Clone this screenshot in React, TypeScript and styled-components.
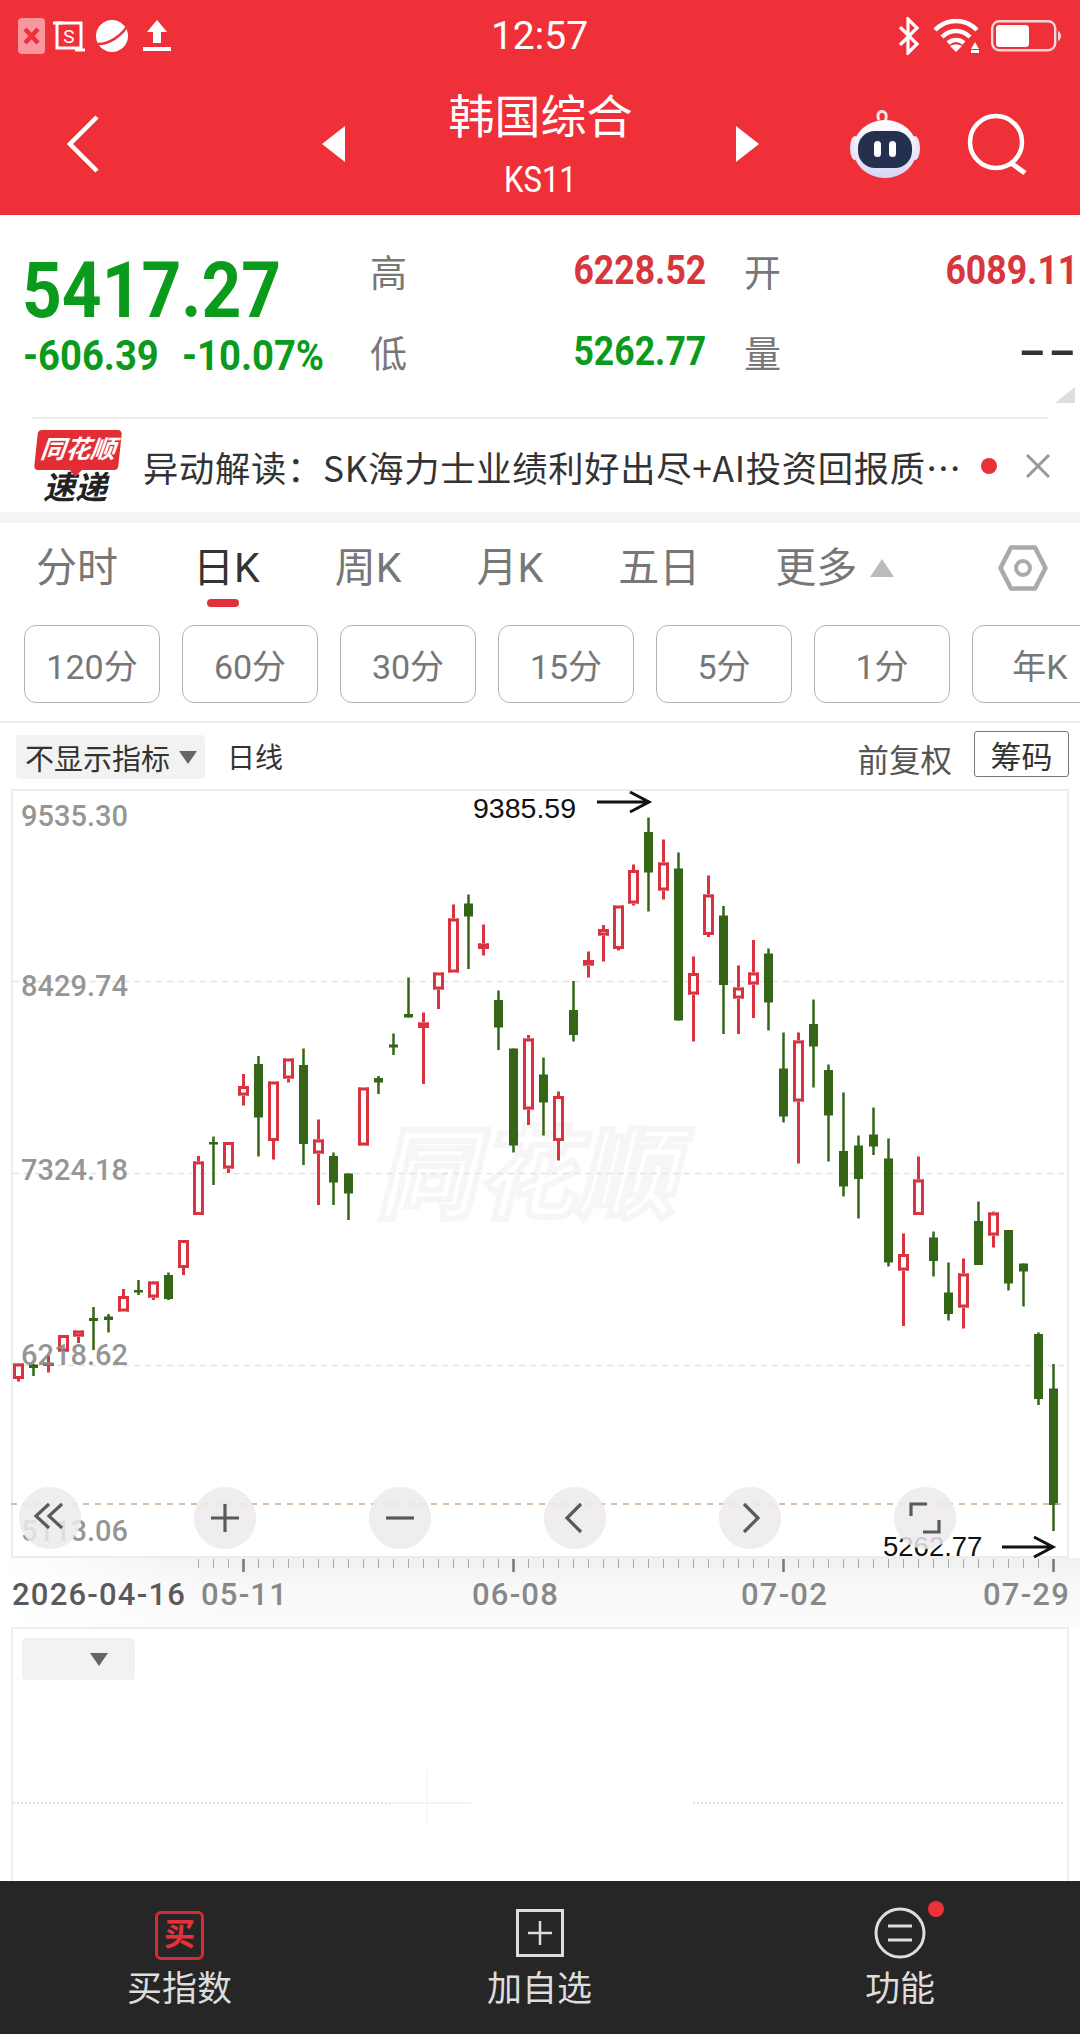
import * as React from 'react';
import styled, { createGlobalStyle } from 'styled-components';

const GlobalStyle = createGlobalStyle`
	html, body {
		margin: 0;
		padding: 0;
		background: #fff;
	}
	body {
		font-family: Roboto, "Noto Sans CJK SC", sans-serif;
	}
`;

const RED = '#d9333f';
const GREEN = '#356618';
const UP = '#d8363d';
const DOWN = '#0a9a1c';

// r = red, g = green: [colour, high, bodyTop, bodyBottom, low]
type Candle = ['r' | 'g', number, number, number, number];

const candles: Candle[] = [
	['r', 1363, 1363.5, 1379, 1381.5],
	['g', 1364, 1364.5, 1368, 1376],
	['r', 1355.5, 1363, 1366, 1372.5],
	['r', 1335, 1335, 1351.5, 1351.5],
	['r', 1330.5, 1330.5, 1336.5, 1343],
	['g', 1307, 1318, 1321, 1350],
	['g', 1314, 1316.5, 1320, 1332.5],
	['r', 1289, 1296, 1311.5, 1311.5],
	['g', 1280, 1290, 1292.5, 1295],
	['r', 1281, 1281.5, 1297.5, 1300],
	['g', 1272.5, 1275, 1299, 1300],
	['r', 1240, 1240, 1268, 1275],
	['r', 1156, 1161.5, 1215, 1215],
	['g', 1136.5, 1142, 1144.5, 1185],
	['r', 1142, 1142, 1168.5, 1173],
	['r', 1074, 1086, 1095.5, 1105.5],
	['g', 1056, 1064, 1117.5, 1156.5],
	['r', 1081.5, 1081.5, 1141, 1159.5],
	['r', 1058.5, 1058.5, 1078.5, 1082.5],
	['g', 1048.5, 1065, 1144, 1165],
	['r', 1119.5, 1139.5, 1153.5, 1205],
	['g', 1152.5, 1156, 1182.5, 1205],
	['g', 1173.5, 1173.5, 1193.5, 1220],
	['r', 1087.5, 1087.5, 1145.5, 1145.5],
	['g', 1076, 1078, 1082.5, 1094],
	['g', 1033.5, 1044.5, 1047.5, 1055],
	['g', 977.5, 1014, 1017.5, 1017.5],
	['r', 1012.5, 1022.5, 1028, 1084],
	['r', 972.5, 972.5, 989.5, 1009],
	['r', 904.5, 918.5, 972.5, 972.5],
	['g', 894.5, 903.5, 916.5, 969],
	['r', 924.5, 943.5, 949, 955.5],
	['g', 990.5, 1000, 1027.5, 1050],
	['g', 1048.5, 1048.5, 1145.5, 1152.5],
	['r', 1035, 1038.5, 1109.5, 1125],
	['g', 1057.5, 1074.5, 1102.5, 1135.5],
	['r', 1091.5, 1096, 1141, 1160.5],
	['g', 981, 1010, 1035, 1041.5],
	['r', 951.5, 960, 965.5, 977.5],
	['r', 925, 929, 935.5, 961.5],
	['r', 905.5, 905.5, 949, 950.5],
	['r', 864.5, 870, 903.5, 905.5],
	['g', 817.5, 832, 872.5, 911.5],
	['r', 839.5, 862.5, 890.5, 899.5],
	['g', 852.5, 868.5, 1020.5, 1020.5],
	['r', 956.5, 973, 994.5, 1041.5],
	['r', 875.5, 894.5, 935, 937],
	['g', 906, 915.5, 985, 1034],
	['r', 965.5, 987.5, 998.5, 1034],
	['r', 940, 972.5, 984.5, 1018],
	['g', 948.5, 953.5, 1002.5, 1030.5],
	['g', 1032.5, 1068.5, 1116.5, 1122.5],
	['r', 1032.5, 1040.5, 1101.5, 1163.5],
	['g', 999.5, 1024, 1046.5, 1087.5],
	['g', 1064.5, 1070, 1115.5, 1161.5],
	['g', 1092.5, 1151, 1186.5, 1196.5],
	['g', 1135.5, 1145.5, 1179, 1218.5],
	['g', 1107.5, 1134.5, 1146.5, 1155],
	['g', 1138.5, 1158.5, 1262.5, 1266.5],
	['r', 1233.5, 1254, 1270.5, 1326],
	['r', 1156.5, 1179.5, 1215, 1215],
	['g', 1231.5, 1237.5, 1261, 1276.5],
	['g', 1262.5, 1292.5, 1314, 1320.5],
	['r', 1258.5, 1273.5, 1307.5, 1328.5],
	['g', 1201.5, 1221, 1265, 1265],
	['r', 1211.5, 1212.5, 1235.5, 1247.5],
	['g', 1230, 1230, 1283.5, 1290.5],
	['g', 1263.5, 1263.5, 1271.5, 1306.5],
	['g', 1332.5, 1334, 1399, 1405],
	['g', 1364, 1388.5, 1505, 1531],
];

const candleX = (i: number) => 18.5 + 15 * i;

const Page = styled.div`
	width: 1080px;
	height: 2034px;
	display: flex;
	flex-direction: column;
	overflow: hidden;
	background: #fff;
`;

const Header = styled.header`
	height: 215px;
	flex: none;
	background: #ef3039;
	color: #fff;
	display: flex;
	flex-direction: column;
`;

const StatusBar = styled.div`
	height: 72px;
	padding: 0 19px 0 18px;
	display: grid;
	grid-template-columns: 1fr auto 1fr;
	align-items: center;
`;

const StatusIcons = styled.div<{ $end?: boolean }>`
	display: flex;
	align-items: center;
	justify-content: ${(p) => (p.$end ? 'flex-end' : 'flex-start')};
	gap: ${(p) => (p.$end ? '12px' : '8px')};
`;

const PlanetIcon = styled.svg`
	margin-left: 2px;
`;

const UploadIcon = styled.svg`
	margin-left: 4px;
`;

const Clock = styled.div`
	font-size: 39px;
	line-height: 72px;
`;

const NavBar = styled.div`
	flex: 1;
	display: flex;
	align-items: center;
	padding-left: 67px;
`;

const BackSlot = styled.div`
	width: 255px;
	flex: none;
	display: flex;
`;

const StockTitle = styled.div`
	width: 391px;
	flex: none;
	text-align: center;
	padding-top: 8px;
`;

const StockName = styled.div`
	font-size: 46px;
	line-height: 58px;
	margin-top: -8px;
`;

const StockCode = styled.div`
	display: inline-block;
	font-size: 37px;
	line-height: 40px;
	margin-top: 14px;
	transform: scaleX(0.84);
`;

const RobotSlot = styled.svg`
	margin-left: 89px;
	flex: none;
`;

const SearchSlot = styled.svg`
	margin-left: 45px;
	flex: none;
`;

const Quote = styled.section`
	position: relative;
	height: 202px;
	flex: none;
	display: flex;
	padding: 32px 0 0 23px;
	box-sizing: border-box;
`;

const PriceBlock = styled.div`
	width: 347px;
	flex: none;
	color: ${DOWN};
	font-weight: 700;
`;

const BigPrice = styled.div`
	font-size: 78px;
	line-height: 72px;
	margin-top: 8px;
	margin-left: -1px;
	transform: scaleX(0.89);
	transform-origin: left center;
	white-space: nowrap;
`;

const PriceChange = styled.div`
	display: grid;
	grid-template-columns: 159px auto;
	margin-top: 7px;
	font-size: 42px;
	line-height: 44px;
	white-space: nowrap;
`;

const ChangeValue = styled.span`
	display: inline-block;
	transform: scaleX(0.91);
	transform-origin: left center;
`;

const Stats = styled.div`
	display: grid;
	grid-template-columns: 336px 334px;
	column-gap: 38px;
	row-gap: 34px;
	align-content: start;
`;

const Stat = styled.div`
	display: flex;
	justify-content: space-between;
	align-items: center;
	height: 47px;
`;

const StatLabel = styled.span`
	font-size: 37px;
	color: #777;
`;

const StatValue = styled.span<{ $color: string }>`
	display: inline-block;
	font-size: 40px;
	font-weight: 700;
	color: ${(p) => p.$color};
	transform: scaleX(0.89);
	transform-origin: right center;
`;

const EmptyValue = styled(StatValue)`
	transform: scaleX(1.9);
`;

const CornerMark = styled.div`
	position: absolute;
	right: 5px;
	bottom: 14px;
	width: 0;
	height: 0;
	border-left: 20px solid transparent;
	border-bottom: 16px solid #ddd;
`;

const NewsRow = styled.div`
	height: 95px;
	flex: none;
	margin: 0 32px;
	padding-top: 11px;
	box-sizing: border-box;
	border-top: 2px solid #eeeeee;
	display: flex;
	align-items: flex-start;
	position: relative;
`;

const NewsLogo = styled.div`
	width: 89px;
	margin-left: 1px;
	flex: none;
	display: flex;
	flex-direction: column;
	align-items: center;
`;

const LogoBadge = styled.div`
	position: relative;
	width: 84px;
	height: 40px;
	background: #e32d35;
	border-radius: 4px;
	transform: skewX(-6deg);
	color: #fff;
	font-size: 25px;
	line-height: 40px;
	font-weight: 700;
	font-style: italic;
	text-align: center;
	white-space: nowrap;

	&::after {
		content: '';
		position: absolute;
		left: 36px;
		bottom: -7px;
		border-left: 6px solid transparent;
		border-right: 6px solid transparent;
		border-top: 7px solid #e32d35;
	}
`;

const LogoSub = styled.div`
	font-size: 32px;
	line-height: 30px;
	font-weight: 700;
	font-style: italic;
	color: #222;
	margin: 3px 5px 0 0;
`;

const NewsText = styled.div`
	flex: none;
	width: 818px;
	margin-left: 21px;
	font-family: "Noto Sans CJK SC", sans-serif;
	font-size: 35.3px;
	line-height: 74px;
	letter-spacing: 0.7px;
	color: #333;
	white-space: nowrap;
	overflow: hidden;
`;

const NewsDot = styled.div`
	width: 16px;
	height: 16px;
	border-radius: 50%;
	background: #e8303a;
	margin: 28px 0 0 20px;
	flex: none;
`;

const NewsClose = styled.svg`
	position: absolute;
	right: -2px;
	top: 35px;
`;

const GreyBand = styled.div`
	height: 11px;
	flex: none;
	background: #f5f5f5;
`;

const TabBar = styled.nav`
	height: 86px;
	flex: none;
	display: flex;
	align-items: center;
	gap: 75px;
	padding: 4px 32px 0 36px;
	box-sizing: border-box;
`;

const Tab = styled.div<{ $active?: boolean }>`
	position: relative;
	font-size: 41px;
	line-height: 50px;
	color: ${(p) => (p.$active ? '#333' : '#777')};
	white-space: nowrap;

	&::after {
		content: '';
		display: ${(p) => (p.$active ? 'block' : 'none')};
		position: absolute;
		left: 14px;
		bottom: -14px;
		width: 32px;
		height: 8px;
		border-radius: 4px;
		background: #e1303a;
	}
`;

const MoreTab = styled.div`
	display: flex;
	align-items: center;
	gap: 13px;
`;

const SettingsIcon = styled.svg`
	margin-left: auto;
	flex: none;
`;

const FilterRow = styled.div`
	flex: none;
	display: flex;
	gap: 22px;
	padding: 16px 0 18px 24px;
	overflow: hidden;
	border-bottom: 2px solid #eeeeee;
`;

const FilterButton = styled.div`
	flex: none;
	width: 136px;
	height: 78px;
	box-sizing: border-box;
	border: 1.5px solid #b4b4b4;
	border-radius: 12px;
	display: flex;
	align-items: center;
	justify-content: center;
	font-size: 34px;
	color: #777;
`;

const ChartToolbar = styled.div`
	height: 66px;
	flex: none;
	display: flex;
	align-items: center;
	padding: 0 11px 0 16px;
`;

const IndicatorSelect = styled.div`
	width: 189px;
	height: 44px;
	box-sizing: border-box;
	padding-left: 9px;
	background: #f2f2f2;
	border-radius: 4px;
	display: flex;
	align-items: center;
	gap: 9px;
	font-size: 29px;
	color: #333;
	white-space: nowrap;
	margin-top: 2px;
`;

const DownTriangle = styled.div`
	width: 0;
	height: 0;
	border-left: 9px solid transparent;
	border-right: 9px solid transparent;
	border-top: 13px solid #666;
	flex: none;
`;

const LineType = styled.div`
	margin-left: 22px;
	font-size: 28px;
	color: #333;
`;

const AdjustLabel = styled.div`
	margin-left: auto;
	font-size: 31.5px;
	color: #555;
	margin-top: 4px;
`;

const ChipButton = styled.div`
	margin-left: 22px;
	width: 95px;
	height: 46px;
	box-sizing: border-box;
	border: 1.5px solid #777;
	border-radius: 3px;
	display: flex;
	align-items: center;
	justify-content: center;
	font-size: 31px;
	color: #333;
	margin-top: -4px;
`;

const ChartArea = styled.div`
	position: relative;
	height: 769px;
	flex: none;
`;

const ChartSvg = styled.svg`
	display: block;
	position: relative;
`;

const PriceLabel = styled.div<{ $center: number }>`
	position: absolute;
	left: 21px;
	top: ${(p) => p.$center - 789 - 20}px;
	font-size: 29px;
	line-height: 40px;
	font-weight: 500;
	color: rgba(136, 136, 136, 0.9);
`;

const Watermark = styled.div`
	position: absolute;
	left: 376px;
	top: 332px;
	font-size: 100px;
	line-height: 110px;
	font-weight: 700;
	font-style: italic;
	color: #fff;
	-webkit-text-stroke: 6px #f6f6f6;
`;

const ExtremeLabel = styled.div<{ $left: number; $center: number; $size: number }>`
	position: absolute;
	left: ${(p) => p.$left}px;
	top: ${(p) => p.$center - 789 - 20}px;
	font-size: ${(p) => p.$size}px;
	line-height: 40px;
	color: #111;
	font-family: "Liberation Sans", sans-serif;
`;

const ChartControls = styled.div`
	position: absolute;
	left: 19px;
	top: 698px;
	display: flex;
	gap: 113px;
`;

const RoundButton = styled.div`
	width: 62px;
	height: 62px;
	border-radius: 50%;
	background: rgba(236, 234, 236, 0.85);
	display: flex;
	align-items: center;
	justify-content: center;
`;

const DateAxis = styled.div`
	height: 69px;
	flex: none;
	background:
		linear-gradient(to right, #fff 0, rgba(255, 255, 255, 0) 240px),
		linear-gradient(to bottom, #f0f0f1 0, #f8f8f8 40%, #fbfbfb 100%);
`;

const TickSvg = styled.svg`
	display: block;
`;

const DateRow = styled.div`
	display: grid;
	grid-template-columns: 189px 271px 269px 242px auto;
	padding-left: 12px;
	margin-top: 4px;
	font-size: 31px;
	line-height: 36px;
	font-weight: 500;
	letter-spacing: 1.2px;
	color: #888;
	white-space: nowrap;
`;

const FirstDate = styled.span`
	color: #5a5a5a;
`;

const LowerPanel = styled.div`
	position: relative;
	flex: 1;
	margin: 0 11px;
	border: 2px solid #eeeeee;
	border-bottom: none;
	padding: 9px 0 0 9px;
`;

const LowerSelect = styled.div`
	width: 113px;
	height: 42px;
	background: #f2f2f2;
	border-radius: 4px;
	display: flex;
	align-items: center;
	justify-content: flex-end;
	padding-right: 27px;
	box-sizing: border-box;
`;

const DottedLine = styled.div`
	position: absolute;
	left: 0;
	right: 4px;
	top: 173px;
	border-top: 2px dotted #e4e4e4;
`;

const LineGap = styled.div`
	position: absolute;
	left: 378px;
	top: 168px;
	width: 300px;
	height: 12px;
	background: #fff;

	&::before {
		content: '';
		position: absolute;
		left: 0;
		top: 5px;
		width: 80px;
		height: 2px;
		background: #f3f3f3;
	}

	&::after {
		content: '';
		position: absolute;
		left: 35px;
		top: -26px;
		width: 2px;
		height: 53px;
		background: #f8f8f8;
	}
`;

const BottomBar = styled.footer`
	height: 153px;
	flex: none;
	background: #262626;
	display: grid;
	grid-template-columns: 359px 361px 360px;
`;

const BottomItem = styled.div`
	position: relative;
	display: flex;
	flex-direction: column;
	align-items: center;
	padding-top: 26px;
	color: #ddd;
	font-size: 35px;
	line-height: 48px;
`;

const IconSlot = styled.div`
	height: 52px;
	margin-bottom: 7px;
	display: flex;
	align-items: center;
	justify-content: center;
`;

const BuyIcon = styled.div`
	width: 49px;
	height: 49px;
	margin-top: 4px;
	box-sizing: border-box;
	border: 3px solid #d92a33;
	border-radius: 6px;
	display: flex;
	align-items: center;
	justify-content: center;
	color: #e8303a;
	font-size: 31px;
	font-weight: 700;
`;

const NoticeDot = styled.div`
	position: absolute;
	left: 208px;
	top: 20px;
	width: 16px;
	height: 16px;
	border-radius: 50%;
	background: #ee3039;
`;

function SideArrow({ right }: { right?: boolean }) {
	return (
		<svg width="23" height="36" viewBox="0 0 23 36">
			<path d={right ? 'M0 0 L23 18 L0 36 Z' : 'M23 0 L0 18 L23 36 Z'} fill="#fff" />
		</svg>
	);
}

function RobotIcon() {
	return (
		<RobotSlot width="74" height="68" viewBox="0 0 74 68">
			<defs>
				<linearGradient id="robotHead" x1="0" y1="0" x2="0" y2="1">
					<stop offset="0" stopColor="#fff" />
					<stop offset="1" stopColor="#d9d6f7" />
				</linearGradient>
			</defs>
			<path d="M31 10 C28 4 32 0 36 2 C40 4 38 9 37 12" fill="none" stroke="#f5e4e4" strokeWidth="3" />
			<ellipse cx="7" cy="38" rx="5" ry="12" fill="#e8e4f8" />
			<ellipse cx="67" cy="38" rx="5" ry="12" fill="#e8e4f8" />
			<ellipse cx="37" cy="39" rx="32" ry="29" fill="url(#robotHead)" />
			<rect x="10" y="21" width="54" height="37" rx="17" fill="#25304f" />
			<rect x="26" y="31" width="7" height="16" rx="3.5" fill="#fff" />
			<rect x="41" y="31" width="7" height="16" rx="3.5" fill="#fff" />
		</RobotSlot>
	);
}

function SearchIcon() {
	return (
		<SearchSlot width="62" height="62" viewBox="0 0 62 62">
			<circle cx="29" cy="29" r="26" fill="none" stroke="#fff" strokeWidth="4.5" />
			<path d="M44 50 L58 60" fill="none" stroke="#fff" strokeWidth="5" />
		</SearchSlot>
	);
}

function StatusLeft() {
	return (
		<StatusIcons>
			<svg width="27" height="36" viewBox="0 0 27 36">
				<rect width="27" height="36" rx="4" fill="#fff" fillOpacity="0.5" />
				<path d="M7 11 L20 25 M20 11 L7 25" stroke="#ef3039" strokeWidth="4.5" />
			</svg>
			<svg width="32" height="34" viewBox="0 0 32 34">
				<rect x="4" y="4" width="24" height="25" fill="none" stroke="#fff" strokeWidth="3" />
				<path d="M0 4 H10 M22 31 H32" stroke="#fff" strokeWidth="3" />
				<text x="16" y="24" fontSize="19" fill="#fff" textAnchor="middle" fontFamily="Roboto, sans-serif">S</text>
			</svg>
			<PlanetIcon width="36" height="34" viewBox="0 0 36 34">
				<circle cx="17" cy="17" r="16" fill="#fff" />
				<path d="M1 25 C12 26 28 18 35 2" fill="none" stroke="#ef3039" strokeWidth="2.5" />
			</PlanetIcon>
			<UploadIcon width="28" height="32" viewBox="0 0 28 32">
				<path d="M14 0 L24 12 H18 V23 H10 V12 H4 Z" fill="#fff" />
				<rect y="27" width="28" height="4" fill="#fff" />
			</UploadIcon>
		</StatusIcons>
	);
}

function StatusRight() {
	return (
		<StatusIcons $end>
			<svg width="24" height="38" viewBox="0 0 24 38">
				<path d="M3 10 L20 27 L11 36 V2 L20 11 L3 28" fill="none" stroke="#fff" strokeWidth="3.2" />
			</svg>
			<svg width="46" height="34" viewBox="0 0 46 34">
				<path d="M2 11 C14 -1 32 -1 44 11" fill="none" stroke="#fff" strokeWidth="4.5" />
				<path d="M9 18 C17 10 29 10 37 18" fill="none" stroke="#fff" strokeWidth="4.5" />
				<path d="M15 24 C20 20 26 20 31 24" fill="none" stroke="#fff" strokeWidth="4.5" />
				<path d="M23 33 L17 27 C20 25 26 25 29 27 Z" fill="#fff" />
				<path d="M42 23 L46 30 H38 Z M38 31 H46 V34 H38 Z" fill="#fff" />
			</svg>
			<svg width="70" height="32" viewBox="0 0 70 32">
				<rect x="1.2" y="1.2" width="63" height="29" rx="7" fill="none" stroke="#f8d7d9" strokeWidth="2.4" />
				<rect x="5" y="5" width="33" height="22" rx="3.5" fill="#fff" />
				<path d="M67 11 C69 12 70 14 70 16 C70 18 69 20 67 21 Z" fill="#f8d7d9" />
			</svg>
		</StatusIcons>
	);
}

function HexIcon() {
	return (
		<SettingsIcon width="50" height="46" viewBox="0 0 50 46">
			<path d="M13 2.5 H37 L47.5 23 L37 43.5 H13 L2.5 23 Z" fill="none" stroke="#aaa" strokeWidth="4.5" strokeLinejoin="round" />
			<circle cx="25" cy="23" r="7" fill="none" stroke="#aaa" strokeWidth="4" />
		</SettingsIcon>
	);
}

function CandleMark({ candle, x }: { candle: Candle; x: number }) {
	const [kind, hi, top, bot, lo] = candle;
	if (kind === 'g') {
		return (
			<g fill={GREEN}>
				<rect x={x - 1.25} y={hi} width={2.5} height={lo - hi} />
				<rect x={x - 4.5} y={top} width={9} height={bot - top} />
			</g>
		);
	}
	return (
		<g fill={RED}>
			<rect x={x - 1.5} y={hi} width={3} height={top - hi} />
			<rect x={x - 1.5} y={bot} width={3} height={lo - bot} />
			<rect x={x - 5.5} y={top} width={11} height={3} />
			<rect x={x - 5.5} y={bot - 3} width={11} height={3} />
			<rect x={x - 5.5} y={top} width={3} height={bot - top} />
			<rect x={x + 2.5} y={top} width={3} height={bot - top} />
		</g>
	);
}

function Arrow({ x1, x2, y }: { x1: number; x2: number; y: number }) {
	return (
		<path
			d={`M${x1} ${y} H${x2} M${x2 - 19} ${y - 10} L${x2} ${y} L${x2 - 19} ${y + 10}`}
			fill="none"
			stroke="#111"
			strokeWidth="3"
		/>
	);
}

function KLineChart() {
	return (
		<ChartSvg width="1080" height="769" viewBox="0 789 1080 769">
			<rect x="12" y="790" width="1056" height="767" fill="none" stroke="#ececec" strokeWidth="2" />
			{[981.5, 1173.5, 1365.5].map((y) => (
				<line key={y} x1="13" x2="1067" y1={y} y2={y} stroke="#e4e4e4" strokeWidth="1.5" strokeDasharray="6 5" />
			))}
			{candles.map((c, i) => (
				<CandleMark key={i} candle={c} x={candleX(i)} />
			))}
			<line x1="11" x2="1067" y1="1504" y2="1504" stroke="#c9a98c" strokeWidth="1.5" strokeDasharray="6 6" />
			<Arrow x1={597} x2={649} y={802} />
			<Arrow x1={1002} x2={1053} y={1547} />
		</ChartSvg>
	);
}

function ControlIcon({ d }: { d: string }) {
	return (
		<svg width="36" height="36" viewBox="0 0 36 36">
			<path d={d} fill="none" stroke="#5a5a5a" strokeWidth="3.2" />
		</svg>
	);
}

function AxisTicks() {
	return (
		<TickSvg width="1080" height="15" viewBox="0 0 1080 15">
			{candles.map((_, i) => {
				if (i < 12) return null;
				const x = candleX(i);
				const major = i === 15 || i === 33 || i === 51 || i === 69;
				return major ? (
					<rect key={i} x={x - 1.25} y="1" width="2.5" height="13" fill="#777" />
				) : (
					<rect key={i} x={x - 0.5} y="1" width="1" height="9" fill="#aaa" />
				);
			})}
		</TickSvg>
	);
}

export default function App() {
	return (
		<Page>
			<GlobalStyle />
			<Header>
				<StatusBar>
					<StatusLeft />
					<Clock>12:57</Clock>
					<StatusRight />
				</StatusBar>
				<NavBar>
					<BackSlot>
						<svg width="32" height="58" viewBox="0 0 32 58">
							<path d="M30 2 L3 29 L30 56" fill="none" stroke="#fff" strokeWidth="4.5" />
						</svg>
					</BackSlot>
					<SideArrow />
					<StockTitle>
						<StockName>韩国综合</StockName>
						<StockCode>KS11</StockCode>
					</StockTitle>
					<SideArrow right />
					<RobotIcon />
					<SearchIcon />
				</NavBar>
			</Header>

			<Quote>
				<PriceBlock>
					<BigPrice>5417.27</BigPrice>
					<PriceChange>
						<ChangeValue>-606.39</ChangeValue>
						<ChangeValue>-10.07%</ChangeValue>
					</PriceChange>
				</PriceBlock>
				<Stats>
					<Stat>
						<StatLabel>高</StatLabel>
						<StatValue $color={UP}>6228.52</StatValue>
					</Stat>
					<Stat>
						<StatLabel>开</StatLabel>
						<StatValue $color={UP}>6089.11</StatValue>
					</Stat>
					<Stat>
						<StatLabel>低</StatLabel>
						<StatValue $color={DOWN}>5262.77</StatValue>
					</Stat>
					<Stat>
						<StatLabel>量</StatLabel>
						<EmptyValue $color="#333">--</EmptyValue>
					</Stat>
				</Stats>
				<CornerMark />
			</Quote>

			<NewsRow>
				<NewsLogo>
					<LogoBadge>同花顺</LogoBadge>
					<LogoSub>速递</LogoSub>
				</NewsLogo>
				<NewsText>异动解读：SK海力士业绩利好出尽+AI投资回报质⋯</NewsText>
				<NewsDot />
				<NewsClose width="24" height="24" viewBox="0 0 24 24">
					<path d="M1 1 L23 23 M23 1 L1 23" stroke="#999" strokeWidth="3" />
				</NewsClose>
			</NewsRow>
			<GreyBand />

			<TabBar>
				<Tab>分时</Tab>
				<Tab $active>日K</Tab>
				<Tab>周K</Tab>
				<Tab>月K</Tab>
				<Tab>五日</Tab>
				<MoreTab>
					<Tab>更多</Tab>
					<svg width="24" height="18" viewBox="0 0 24 18">
						<path d="M12 0 L24 18 H0 Z" fill="#bbb" />
					</svg>
				</MoreTab>
				<HexIcon />
			</TabBar>

			<FilterRow>
				{['120分', '60分', '30分', '15分', '5分', '1分', '年K'].map((label) => (
					<FilterButton key={label}>{label}</FilterButton>
				))}
			</FilterRow>

			<ChartToolbar>
				<IndicatorSelect>
					不显示指标
					<DownTriangle />
				</IndicatorSelect>
				<LineType>日线</LineType>
				<AdjustLabel>前复权</AdjustLabel>
				<ChipButton>筹码</ChipButton>
			</ChartToolbar>

			<ChartArea>
				<Watermark>同花顺</Watermark>
				<KLineChart />
				<PriceLabel $center={816}>9535.30</PriceLabel>
				<PriceLabel $center={986}>8429.74</PriceLabel>
				<PriceLabel $center={1170}>7324.18</PriceLabel>
				<PriceLabel $center={1355}>6218.62</PriceLabel>
				<PriceLabel $center={1531}>5113.06</PriceLabel>
				<ExtremeLabel $left={473} $center={808} $size={28.5}>9385.59</ExtremeLabel>
				<ExtremeLabel $left={883} $center={1547} $size={27.5}>5262.77</ExtremeLabel>
				<ChartControls>
					<RoundButton>
						<ControlIcon d="M17 4 L4 16 L17 28 M30 4 L17 16 L30 28" />
					</RoundButton>
					<RoundButton>
						<ControlIcon d="M18 4 V32 M4 18 H32" />
					</RoundButton>
					<RoundButton>
						<ControlIcon d="M4 18 H32" />
					</RoundButton>
					<RoundButton>
						<ControlIcon d="M24 4 L10 18 L24 32" />
					</RoundButton>
					<RoundButton>
						<ControlIcon d="M12 4 L26 18 L12 32" />
					</RoundButton>
					<RoundButton>
						<ControlIcon d="M4 16 V4 H20 M32 20 V32 H16" />
					</RoundButton>
				</ChartControls>
			</ChartArea>

			<DateAxis>
				<AxisTicks />
				<DateRow>
					<FirstDate>2026-04-16</FirstDate>
					<span>05-11</span>
					<span>06-08</span>
					<span>07-02</span>
					<span>07-29</span>
				</DateRow>
			</DateAxis>

			<LowerPanel>
				<LowerSelect>
					<DownTriangle />
				</LowerSelect>
				<DottedLine />
				<LineGap />
			</LowerPanel>

			<BottomBar>
				<BottomItem>
					<IconSlot>
						<BuyIcon>买</BuyIcon>
					</IconSlot>
					买指数
				</BottomItem>
				<BottomItem>
					<IconSlot>
						<svg width="48" height="48" viewBox="0 0 48 48">
							<rect x="1.5" y="1.5" width="45" height="45" fill="none" stroke="#ddd" strokeWidth="3" />
							<path d="M24 12 V36 M12 24 H36" stroke="#ddd" strokeWidth="2.5" />
						</svg>
					</IconSlot>
					加自选
				</BottomItem>
				<BottomItem>
					<IconSlot>
						<svg width="52" height="52" viewBox="0 0 52 52">
							<circle cx="26" cy="26" r="24" fill="none" stroke="#ddd" strokeWidth="3" />
							<path d="M14 19 H38 M14 33 H38" stroke="#ddd" strokeWidth="3" />
						</svg>
					</IconSlot>
					功能
					<NoticeDot />
				</BottomItem>
			</BottomBar>
		</Page>
	);
}
